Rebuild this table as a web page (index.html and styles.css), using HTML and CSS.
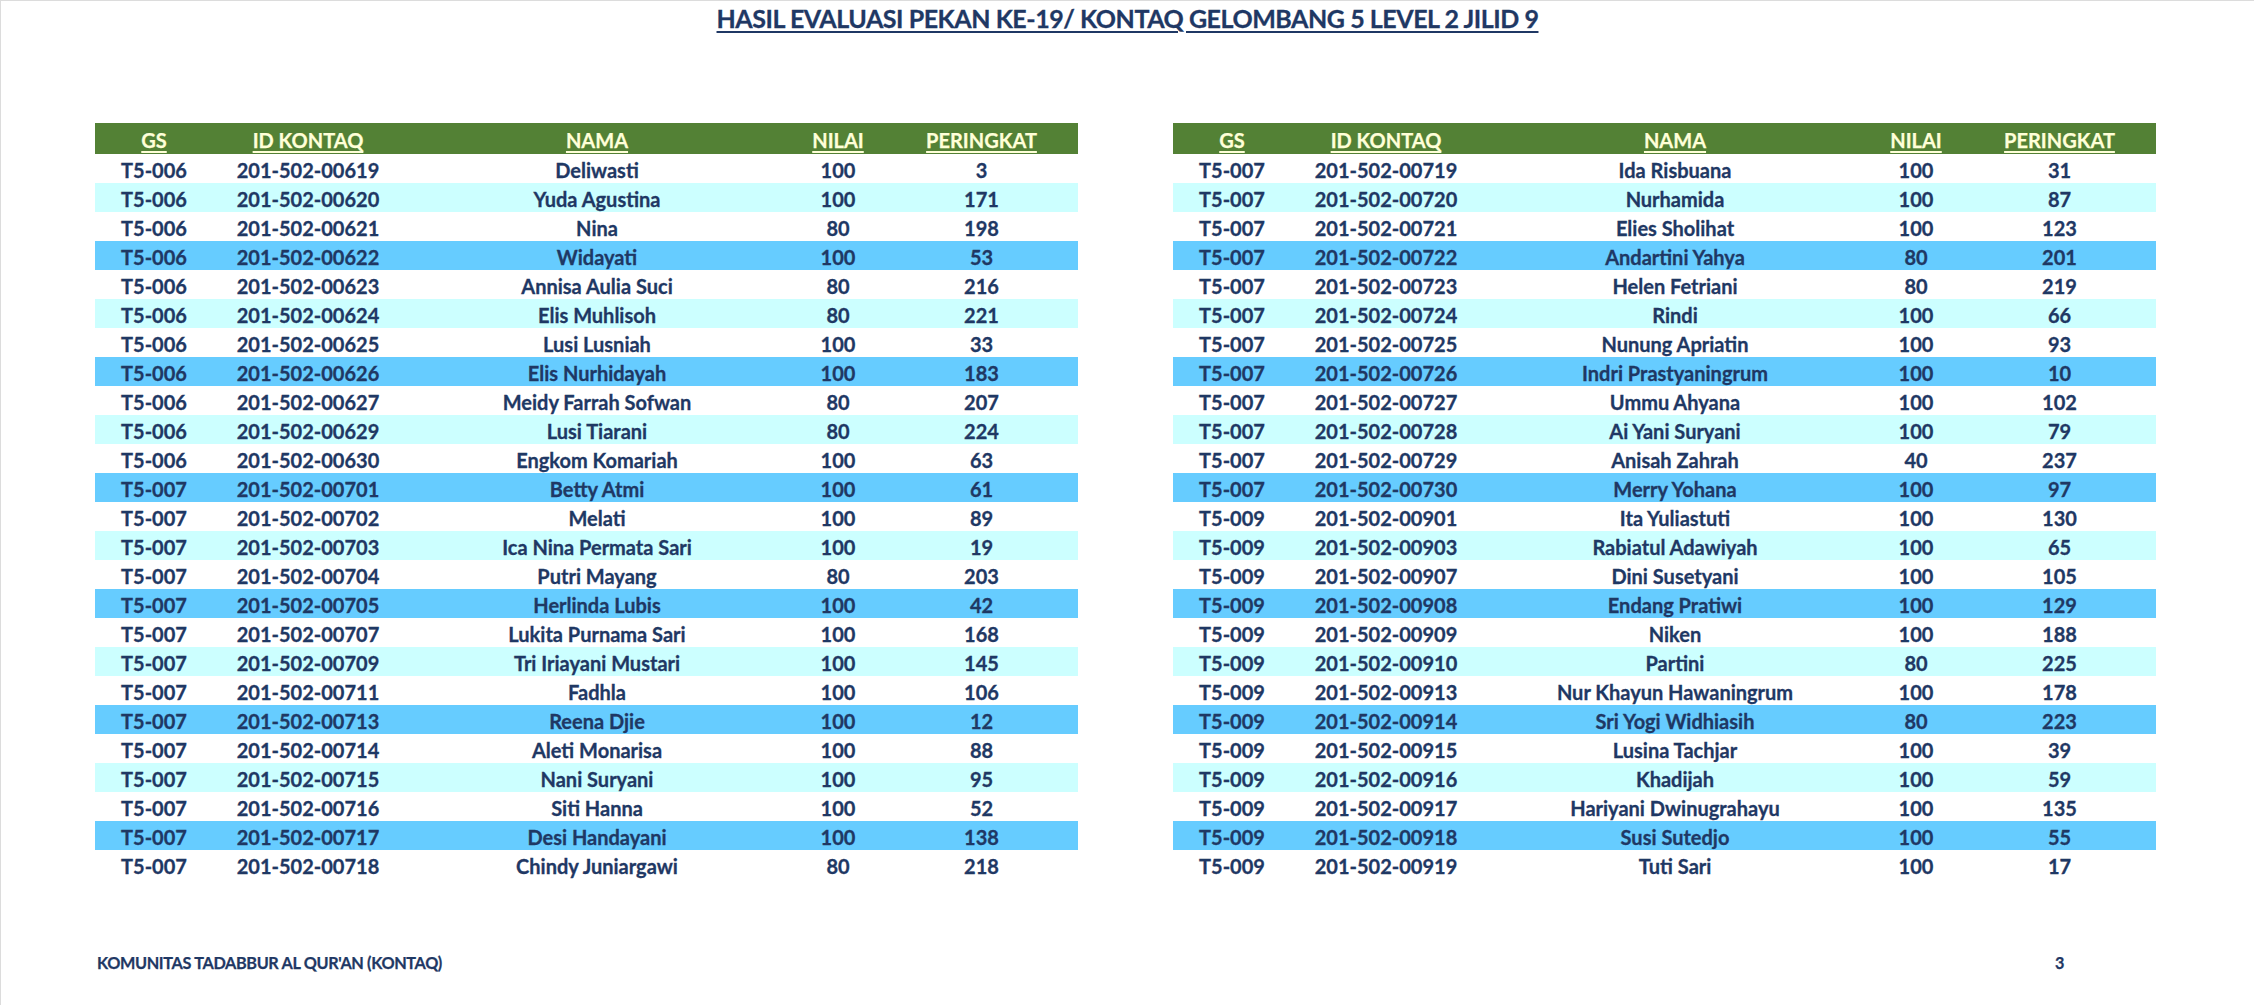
FILE: index.html
```html
<!DOCTYPE html>
<html lang="id">
<head>
<meta charset="utf-8">
<title>Hasil Evaluasi Pekan Ke-19</title>
<link rel="stylesheet" href="styles.css">
</head>
<body>
<div class="page">
  <h1 class="title">HASIL EVALUASI PEKAN KE-19/ KONTAQ GELOMBANG 5 LEVEL 2 JILID 9</h1>
  <div class="tables">
    <table class="sheet">
      <colgroup><col class="c-gs"><col class="c-id"><col class="c-nama"><col class="c-nilai"><col class="c-rank"></colgroup>
      <thead><tr><th><span>GS</span></th><th><span>ID KONTAQ</span></th><th><span>NAMA</span></th><th><span>NILAI</span></th><th><span>PERINGKAT</span></th></tr></thead>
      <tbody>
        <tr><td>T5-006</td><td>201-502-00619</td><td>Deliwasti</td><td>100</td><td>3</td></tr>
        <tr class="cyan"><td>T5-006</td><td>201-502-00620</td><td>Yuda Agustina</td><td>100</td><td>171</td></tr>
        <tr><td>T5-006</td><td>201-502-00621</td><td>Nina</td><td>80</td><td>198</td></tr>
        <tr class="blue"><td>T5-006</td><td>201-502-00622</td><td>Widayati</td><td>100</td><td>53</td></tr>
        <tr><td>T5-006</td><td>201-502-00623</td><td>Annisa Aulia Suci</td><td>80</td><td>216</td></tr>
        <tr class="cyan"><td>T5-006</td><td>201-502-00624</td><td>Elis Muhlisoh</td><td>80</td><td>221</td></tr>
        <tr><td>T5-006</td><td>201-502-00625</td><td>Lusi Lusniah</td><td>100</td><td>33</td></tr>
        <tr class="blue"><td>T5-006</td><td>201-502-00626</td><td>Elis Nurhidayah</td><td>100</td><td>183</td></tr>
        <tr><td>T5-006</td><td>201-502-00627</td><td>Meidy Farrah Sofwan</td><td>80</td><td>207</td></tr>
        <tr class="cyan"><td>T5-006</td><td>201-502-00629</td><td>Lusi Tiarani</td><td>80</td><td>224</td></tr>
        <tr><td>T5-006</td><td>201-502-00630</td><td>Engkom Komariah</td><td>100</td><td>63</td></tr>
        <tr class="blue"><td>T5-007</td><td>201-502-00701</td><td>Betty Atmi</td><td>100</td><td>61</td></tr>
        <tr><td>T5-007</td><td>201-502-00702</td><td>Melati</td><td>100</td><td>89</td></tr>
        <tr class="cyan"><td>T5-007</td><td>201-502-00703</td><td>Ica Nina Permata Sari</td><td>100</td><td>19</td></tr>
        <tr><td>T5-007</td><td>201-502-00704</td><td>Putri Mayang</td><td>80</td><td>203</td></tr>
        <tr class="blue"><td>T5-007</td><td>201-502-00705</td><td>Herlinda Lubis</td><td>100</td><td>42</td></tr>
        <tr><td>T5-007</td><td>201-502-00707</td><td>Lukita Purnama Sari</td><td>100</td><td>168</td></tr>
        <tr class="cyan"><td>T5-007</td><td>201-502-00709</td><td>Tri Iriayani Mustari</td><td>100</td><td>145</td></tr>
        <tr><td>T5-007</td><td>201-502-00711</td><td>Fadhla</td><td>100</td><td>106</td></tr>
        <tr class="blue"><td>T5-007</td><td>201-502-00713</td><td>Reena Djie</td><td>100</td><td>12</td></tr>
        <tr><td>T5-007</td><td>201-502-00714</td><td>Aleti Monarisa</td><td>100</td><td>88</td></tr>
        <tr class="cyan"><td>T5-007</td><td>201-502-00715</td><td>Nani Suryani</td><td>100</td><td>95</td></tr>
        <tr><td>T5-007</td><td>201-502-00716</td><td>Siti Hanna</td><td>100</td><td>52</td></tr>
        <tr class="blue"><td>T5-007</td><td>201-502-00717</td><td>Desi Handayani</td><td>100</td><td>138</td></tr>
        <tr><td>T5-007</td><td>201-502-00718</td><td>Chindy Juniargawi</td><td>80</td><td>218</td></tr>
      </tbody>
    </table>
    <table class="sheet">
      <colgroup><col class="c-gs"><col class="c-id"><col class="c-nama"><col class="c-nilai"><col class="c-rank"></colgroup>
      <thead><tr><th><span>GS</span></th><th><span>ID KONTAQ</span></th><th><span>NAMA</span></th><th><span>NILAI</span></th><th><span>PERINGKAT</span></th></tr></thead>
      <tbody>
        <tr><td>T5-007</td><td>201-502-00719</td><td>Ida Risbuana</td><td>100</td><td>31</td></tr>
        <tr class="cyan"><td>T5-007</td><td>201-502-00720</td><td>Nurhamida</td><td>100</td><td>87</td></tr>
        <tr><td>T5-007</td><td>201-502-00721</td><td>Elies Sholihat</td><td>100</td><td>123</td></tr>
        <tr class="blue"><td>T5-007</td><td>201-502-00722</td><td>Andartini Yahya</td><td>80</td><td>201</td></tr>
        <tr><td>T5-007</td><td>201-502-00723</td><td>Helen Fetriani</td><td>80</td><td>219</td></tr>
        <tr class="cyan"><td>T5-007</td><td>201-502-00724</td><td>Rindi</td><td>100</td><td>66</td></tr>
        <tr><td>T5-007</td><td>201-502-00725</td><td>Nunung Apriatin</td><td>100</td><td>93</td></tr>
        <tr class="blue"><td>T5-007</td><td>201-502-00726</td><td>Indri Prastyaningrum</td><td>100</td><td>10</td></tr>
        <tr><td>T5-007</td><td>201-502-00727</td><td>Ummu Ahyana</td><td>100</td><td>102</td></tr>
        <tr class="cyan"><td>T5-007</td><td>201-502-00728</td><td>Ai Yani Suryani</td><td>100</td><td>79</td></tr>
        <tr><td>T5-007</td><td>201-502-00729</td><td>Anisah Zahrah</td><td>40</td><td>237</td></tr>
        <tr class="blue"><td>T5-007</td><td>201-502-00730</td><td>Merry Yohana</td><td>100</td><td>97</td></tr>
        <tr><td>T5-009</td><td>201-502-00901</td><td>Ita Yuliastuti</td><td>100</td><td>130</td></tr>
        <tr class="cyan"><td>T5-009</td><td>201-502-00903</td><td>Rabiatul Adawiyah</td><td>100</td><td>65</td></tr>
        <tr><td>T5-009</td><td>201-502-00907</td><td>Dini Susetyani</td><td>100</td><td>105</td></tr>
        <tr class="blue"><td>T5-009</td><td>201-502-00908</td><td>Endang Pratiwi</td><td>100</td><td>129</td></tr>
        <tr><td>T5-009</td><td>201-502-00909</td><td>Niken</td><td>100</td><td>188</td></tr>
        <tr class="cyan"><td>T5-009</td><td>201-502-00910</td><td>Partini</td><td>80</td><td>225</td></tr>
        <tr><td>T5-009</td><td>201-502-00913</td><td>Nur Khayun Hawaningrum</td><td>100</td><td>178</td></tr>
        <tr class="blue"><td>T5-009</td><td>201-502-00914</td><td>Sri Yogi Widhiasih</td><td>80</td><td>223</td></tr>
        <tr><td>T5-009</td><td>201-502-00915</td><td>Lusina Tachjar</td><td>100</td><td>39</td></tr>
        <tr class="cyan"><td>T5-009</td><td>201-502-00916</td><td>Khadijah</td><td>100</td><td>59</td></tr>
        <tr><td>T5-009</td><td>201-502-00917</td><td>Hariyani Dwinugrahayu</td><td>100</td><td>135</td></tr>
        <tr class="blue"><td>T5-009</td><td>201-502-00918</td><td>Susi Sutedjo</td><td>100</td><td>55</td></tr>
        <tr><td>T5-009</td><td>201-502-00919</td><td>Tuti Sari</td><td>100</td><td>17</td></tr>
      </tbody>
    </table>
  </div>
  <div class="footer">
    <div class="org">KOMUNITAS TADABBUR AL QUR'AN (KONTAQ)</div>
    <div class="pageno">3</div>
  </div>
</div>
</body>
</html>
```
FILE: styles.css
```css
html, body {
  margin: 0;
  padding: 0;
  background: #ffffff;
}
body {
  font-family: Lato, "Open Sans", "Liberation Sans", sans-serif;
  font-weight: 700;
  color: #1f3864;
}
.page {
  width: 2254px;
  height: 1005px;
  box-sizing: border-box;
  border-top: 1px solid #dcdcdc;
  border-left: 1px solid #dcdcdc;
  overflow: hidden;
}
.title {
  margin: 0;
  padding-top: 2px;
  height: 30px;
  text-align: center;
  font-size: 25px;
  line-height: 30px;
  font-weight: 700;
  letter-spacing: -0.45px;
  color: #1f3864;
  -webkit-text-stroke: 0.3px #1f3864;
  text-decoration: underline;
  text-decoration-thickness: 2px;
  text-underline-offset: 3px;
}
.tables {
  display: flex;
  gap: 95px;
  margin-top: 90px;
  padding-left: 94px;
}
.sheet {
  width: 983px;
  border-collapse: collapse;
  table-layout: fixed;
  font-size: 20px;
}
.c-gs { width: 118px; }
.c-id { width: 190px; }
.c-nama { width: 388px; }
.c-nilai { width: 94px; }
.c-rank { width: 193px; }
.sheet th {
  background: #538135;
  color: #ffffd8;
  height: 31px;
  padding: 5px 0 2px;
  box-sizing: border-box;
  line-height: 24px;
  font-weight: 700;
  text-align: center;
  white-space: nowrap;
  -webkit-text-stroke: 0.25px #ffffd8;
}
.sheet th span {
  text-decoration: underline;
  text-decoration-thickness: 1.5px;
  text-underline-offset: 3px;
}
.sheet td {
  height: 29px;
  box-sizing: border-box;
  padding: 4px 0 1px;
  line-height: 24px;
  text-align: center;
  white-space: nowrap;
  -webkit-text-stroke: 0.3px #1f3864;
}
.sheet tr.cyan td { background: #ccffff; }
.sheet tr.blue td { background: #66ccff; }
.footer {
  display: flex;
  justify-content: space-between;
  align-items: baseline;
  margin-top: 73px;
  margin-left: 96px;
  width: 2059px;
  font-size: 16.25px;
  line-height: 22px;
  letter-spacing: -0.35px;
  -webkit-text-stroke: 0.25px #1f3864;
}
.pageno {
  width: 193px;
  text-align: center;
}
```
